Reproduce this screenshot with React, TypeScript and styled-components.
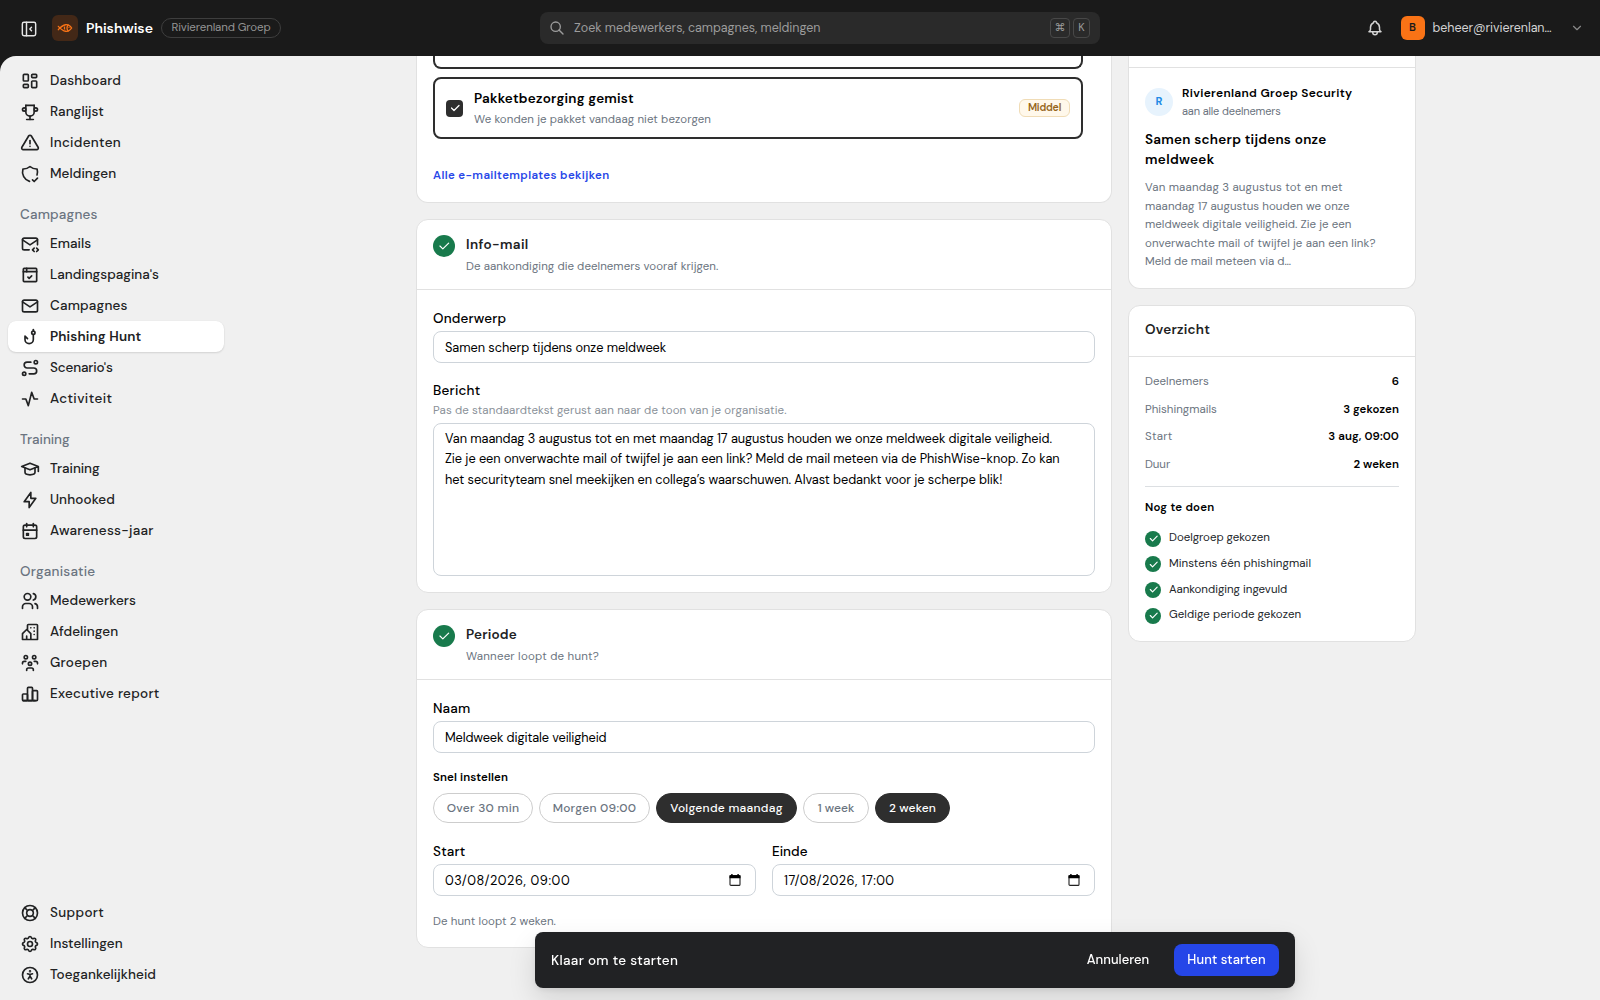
import React from "react";
import styled, { createGlobalStyle, css } from "styled-components";
import {
  TbLayoutDashboard, TbTrophy, TbAlertTriangle, TbShieldCheck, TbMailCode, TbBrowserCheck, TbMail,
  TbFishHook, TbRoute, TbActivity, TbSchool, TbBolt, TbCalendarEvent, TbUsers, TbBuildingCommunity,
  TbUsersGroup, TbChartBar, TbLifebuoy, TbSettings, TbAccessible, TbFish, TbSearch, TbBell,
  TbChevronDown, TbCheck, TbLayoutSidebarLeftCollapse,
} from "react-icons/tb";

type Tracked = { $ls?: number };
type Label = [text: string, tracking: number];

const tracking = css<Tracked>`
  letter-spacing: ${(p) => p.$ls ?? 0}px;
  white-space: nowrap;
`;

const GlobalStyle = createGlobalStyle`
  *, *::before, *::after { box-sizing: border-box; }
  body {
    margin: 0;
    background: #1a1a1a;
    color: #000;
    font-family: "DM Sans", Inter, "Liberation Sans", sans-serif;
    font-size: 13.5px;
    -webkit-font-smoothing: antialiased;
  }
`;

/* ---------- shell ---------- */

const Page = styled.div`
  display: flex;
  flex-direction: column;
  height: 1000px;
  overflow: hidden;
`;

const Shell = styled.div`
  flex: 1;
  min-height: 0;
  display: flex;
  background: #f0f0f0;
  border-top-left-radius: 16px;
  overflow: hidden;
`;

/* ---------- top bar ---------- */

const TopBar = styled.header`
  flex: none;
  height: 56px;
  display: grid;
  grid-template-columns: 540px 560px 1fr;
  align-items: center;
  background: #1a1a1a;
`;

const Brand = styled.div`
  display: flex;
  align-items: center;
  padding-left: 18.5px;
`;

const ToggleButton = styled.span`
  display: flex;
  color: #e6e6e6;
  margin: 1px 13.5px 0 0;
`;

const LogoTile = styled.span`
  width: 26px;
  height: 26px;
  border-radius: 6px;
  display: grid;
  place-items: center;
  background: #432817;
  color: #f97316;
`;

const BrandName = styled.span<Tracked>`
  ${tracking}
  margin-left: 8px;
  font-size: 14px;
  font-weight: 600;
  color: #fff;
`;

const OrgTag = styled.span<Tracked>`
  ${tracking}
  height: 20px;
  width: 120px;
  margin-left: 8px;
  border: 1px solid #3e3e3e;
  border-radius: 10px;
  text-align: center;
  font-size: 11.5px;
  line-height: 17px;
  color: #949494;
`;

const SearchBox = styled.div`
  height: 32px;
  display: flex;
  align-items: center;
  padding: 0 10px 0 9px;
  border-radius: 8px;
  background: #2a2a2a;
  color: #9c9c9c;
`;

const SearchHint = styled.span<Tracked>`
  ${tracking}
  flex: 1;
  margin-left: 9px;
  font-size: 12.5px;
`;

const Key = styled.kbd<{ $w: number }>`
  width: ${(p) => p.$w}px;
  height: 20px;
  margin-left: 3px;
  border: 1px solid #484848;
  border-radius: 4px;
  font-family: inherit;
  font-size: 11px;
  line-height: 17px;
  text-align: center;
`;

const Account = styled.div`
  display: flex;
  align-items: center;
  justify-content: flex-end;
  padding-right: 16.5px;
  color: #d4d4d4;
`;

const Avatar = styled.span`
  width: 24px;
  height: 24px;
  margin: 0 8px 0 17px;
  border-radius: 6px;
  background: #f97316;
  color: #1a1a1a;
  font-size: 11px;
  font-weight: 600;
  line-height: 23px;
  text-align: center;
`;

const AccountName = styled.span<Tracked>`
  ${tracking}
  width: 126px;
  margin-right: 11px;
  font-size: 12.5px;
`;

const Dim = styled.span`
  display: flex;
  color: #8a8a8a;
`;

/* ---------- sidebar ---------- */

const Sidebar = styled.nav`
  flex: none;
  width: 232px;
  display: flex;
  flex-direction: column;
  padding: 9px 8px 10px;
`;

const NavHeading = styled.div<Tracked>`
  ${tracking}
  height: 39px;
  padding: 16px 12px 0;
  font-weight: 500;
  line-height: 20px;
  color: #6b7480;
`;

const NavItem = styled.div<{ $active?: boolean }>`
  flex: none;
  width: 216px;
  height: 31px;
  display: flex;
  align-items: center;
  gap: 10.5px;
  padding-left: 11.5px;
  border-radius: 8px;
  color: #212223;
  font-weight: ${(p) => (p.$active ? 600 : 500)};
  background: ${(p) => (p.$active ? "#fff" : "transparent")};
  box-shadow: ${(p) => (p.$active ? "0 1px 2px rgba(0,0,0,.12), 0 0 1px rgba(0,0,0,.08)" : "none")};

  svg { position: relative; top: 0.5px; }
`;

const NavText = styled.span<Tracked>`
  ${tracking}
`;

const Spacer = styled.div`
  flex: 1;
`;

/* ---------- cards ---------- */

const Content = styled.main`
  width: 1000px;
  margin: 0 auto;
  display: flex;
  align-items: flex-start;
  gap: 16px;
`;

const Column = styled.div<{ $w: number }>`
  flex: none;
  width: ${(p) => p.$w}px;
  display: flex;
  flex-direction: column;
  gap: 16px;
`;

const Card = styled.section<{ $cut?: boolean }>`
  border: 1px solid #e1e1e1;
  border-top-width: ${(p) => (p.$cut ? 0 : 1)}px;
  border-radius: ${(p) => (p.$cut ? "0 0 12px 12px" : "12px")};
  background: #fff;
`;

const CardHead = styled.div`
  height: 70px;
  display: flex;
  gap: 11px;
  padding: 15px 16px 0;
  border-bottom: 1px solid #e1e1e1;
`;

const HeadStrip = styled.div`
  height: 12px;
  border-bottom: 1px solid #e1e1e1;
`;

const CardBody = styled.div`
  padding: 16px;
`;

const CheckDot = styled.span<{ $size: number }>`
  flex: none;
  width: ${(p) => p.$size}px;
  height: ${(p) => p.$size}px;
  border-radius: 50%;
  display: grid;
  place-items: center;
  background: #187a4c;
  color: #fff;
`;

const CardTitle = styled.div<Tracked>`
  ${tracking}
  font-weight: 600;
  line-height: 20px;
  color: #212223;
`;

const CardHint = styled.div<Tracked>`
  ${tracking}
  margin-top: 3px;
  font-size: 11.5px;
  line-height: 18px;
  color: #6b7480;
`;

/* ---------- template options ---------- */

const OptionList = styled.div`
  width: 650px;
  margin-left: 16px;
  display: flex;
  flex-direction: column;
  gap: 8px;
`;

const OptionTail = styled.div`
  height: 13px;
  border: 2px solid #2e2e2e;
  border-top: 0;
  border-radius: 0 0 8px 8px;
`;

const Option = styled.div`
  height: 62px;
  display: flex;
  align-items: center;
  padding: 0 11px;
  border: 2px solid #2e2e2e;
  border-radius: 8px;
`;

const Checkbox = styled.span`
  width: 17px;
  height: 17px;
  border-radius: 4px;
  display: grid;
  place-items: center;
  background: #2e2e2e;
  color: #fff;
`;

const OptionText = styled.div`
  flex: 1;
  margin-left: 11px;
`;

const OptionTitle = styled.div<Tracked>`
  ${tracking}
  font-weight: 600;
  line-height: 22px;
`;

const OptionSub = styled.div<Tracked>`
  ${tracking}
  font-size: 11.5px;
  line-height: 19px;
  color: #6b7480;
`;

const LevelBadge = styled.span<Tracked>`
  ${tracking}
  width: 51px;
  height: 18px;
  border: 1px solid #f0dcb6;
  border-radius: 6px;
  background: #fff8eb;
  color: #96661a;
  font-size: 10.5px;
  font-weight: 600;
  line-height: 16px;
  text-align: center;
`;

const TemplatesLink = styled.a<Tracked>`
  ${tracking}
  display: block;
  padding: 28px 16px 17px;
  font-size: 11.5px;
  font-weight: 600;
  line-height: 18px;
  color: #2847e8;
`;

/* ---------- form ---------- */

const FieldLabel = styled.div<Tracked & { $h?: number }>`
  ${tracking}
  font-weight: 500;
  line-height: ${(p) => p.$h ?? 25}px;
`;

const FieldHint = styled.div<Tracked>`
  ${tracking}
  margin-bottom: 4px;
  font-size: 11.5px;
  line-height: 16px;
  color: #8a9199;
`;

const fieldFrame = css`
  border: 1px solid #ced4da;
  border-radius: 8px;
  background: #fff;
  font-size: 12.75px;
`;

const TextField = styled.div<Tracked>`
  ${tracking}
  ${fieldFrame}
  height: 32px;
  display: flex;
  align-items: center;
  justify-content: space-between;
  padding: 0 14px 0 11px;
`;

const TextArea = styled.div`
  ${fieldFrame}
  height: 153px;
  padding: 5px 11px;
  line-height: 20.4px;
`;

const TextLine = styled.div<Tracked>`
  ${tracking}
`;

const Field = styled.div`
  flex: 1;
  & + & { margin-top: 16px; }
`;

const FieldRow = styled.div`
  display: flex;
  gap: 16px;
  margin-top: 16px;
  & > ${Field} { margin-top: 0; }
`;

const QuickLabel = styled.div<Tracked>`
  ${tracking}
  margin: 16px 0 6px;
  font-size: 11.5px;
  font-weight: 600;
  line-height: 18px;
`;

const Pills = styled.div`
  display: flex;
  gap: 6px;
`;

const Pill = styled.span<Tracked & { $w: number; $on?: boolean }>`
  ${tracking}
  width: ${(p) => p.$w}px;
  height: 30px;
  border: 1px solid ${(p) => (p.$on ? "#2e2e2e" : "#cdcdcd")};
  border-radius: 15px;
  background: ${(p) => (p.$on ? "#2e2e2e" : "#fff")};
  color: ${(p) => (p.$on ? "#fff" : "#6b7480")};
  font-size: 12px;
  font-weight: 500;
  line-height: 28px;
  text-align: center;
`;

const DurationNote = styled.div<Tracked>`
  ${tracking}
  margin-top: 16px;
  font-size: 11.5px;
  line-height: 19px;
  color: #6b7480;
`;

/* ---------- aside ---------- */

const Sender = styled.div`
  display: flex;
  align-items: center;
  gap: 9px;
`;

const SenderAvatar = styled.span`
  width: 28px;
  height: 28px;
  border-radius: 50%;
  background: #e7f3fd;
  color: #228be6;
  font-size: 11px;
  font-weight: 700;
  line-height: 27px;
  text-align: center;
`;

const SenderName = styled.div<Tracked>`
  ${tracking}
  font-size: 12px;
  font-weight: 600;
  line-height: 18px;
`;

const SenderTo = styled.div<Tracked>`
  ${tracking}
  font-size: 11px;
  line-height: 18px;
  color: #6b7480;
`;

const Subject = styled.div`
  margin: 10px 0 9px;
  font-weight: 600;
  line-height: 20px;
`;

const Excerpt = styled.div`
  font-size: 11.5px;
  line-height: 18.6px;
  color: #6b7480;
`;

const SummaryHead = styled.div`
  height: 51px;
  padding: 14px 16px 0;
  border-bottom: 1px solid #e1e1e1;
`;

const SummaryList = styled.div`
  display: flex;
  flex-direction: column;
  gap: 9px;
  padding-bottom: 12px;
  border-bottom: 1px solid #dcdfe2;
  font-size: 11.5px;
  line-height: 18.6px;
`;

const SummaryRow = styled.div`
  display: flex;
  justify-content: space-between;
`;

const SummaryKey = styled.span<Tracked>`
  ${tracking}
  color: #6b7480;
`;

const SummaryValue = styled.span<Tracked>`
  ${tracking}
  font-weight: 600;
`;

const TodoTitle = styled.div<Tracked>`
  ${tracking}
  margin: 12px 0 11.5px;
  font-size: 11.5px;
  font-weight: 600;
  line-height: 18.6px;
`;

const TodoList = styled.div`
  display: flex;
  flex-direction: column;
  gap: 7px;
`;

const TodoItem = styled.div`
  display: flex;
  align-items: center;
  gap: 8px;
  font-size: 11.5px;
  line-height: 18.6px;
  color: #212529;
`;

const TodoText = styled.span<Tracked>`
  ${tracking}
`;

/* ---------- action bar ---------- */

const ActionBar = styled.div`
  position: fixed;
  left: 535px;
  bottom: 12px;
  width: 760px;
  height: 56px;
  display: flex;
  align-items: center;
  padding: 0 16px;
  border-radius: 8px;
  background: #212224;
  color: #fff;
  box-shadow: 0 12px 28px rgba(0, 0, 0, 0.12), 0 2px 6px rgba(0, 0, 0, 0.08);
`;

const ReadyText = styled.span<Tracked>`
  ${tracking}
  flex: 1;
  font-weight: 500;
`;

const BarButton = styled.span<Tracked & { $w: number; $primary?: boolean }>`
  ${tracking}
  width: ${(p) => p.$w}px;
  height: 32px;
  border-radius: 8px;
  background: ${(p) => (p.$primary ? "#2546e8" : "transparent")};
  font-size: 13px;
  font-weight: 500;
  line-height: 32px;
  text-align: center;
`;

type NavEntry = [icon: React.ComponentType<{ size?: number }>, text: string, tracking: number];

const mainNav: NavEntry[] = [
  [TbLayoutDashboard, "Dashboard", 0.187],
  [TbTrophy, "Ranglijst", 0.07],
  [TbAlertTriangle, "Incidenten", 0.326],
  [TbShieldCheck, "Meldingen", 0.066],
];

const navGroups: { heading: Label; items: NavEntry[] }[] = [
  {
    heading: ["Campagnes", 0.19],
    items: [
      [TbMailCode, "Emails", 0.023],
      [TbBrowserCheck, "Landingspagina's", 0],
      [TbMail, "Campagnes", 0.19],
      [TbFishHook, "Phishing Hunt", 0.145],
      [TbRoute, "Scenario's", -0.149],
      [TbActivity, "Activiteit", 0.442],
    ],
  },
  {
    heading: ["Training", -0.038],
    items: [
      [TbSchool, "Training", -0.038],
      [TbBolt, "Unhooked", 0.125],
      [TbCalendarEvent, "Awareness-jaar", 0.283],
    ],
  },
  {
    heading: ["Organisatie", 0.216],
    items: [
      [TbUsers, "Medewerkers", 0.067],
      [TbBuildingCommunity, "Afdelingen", 0.063],
      [TbUsersGroup, "Groepen", 0.302],
      [TbChartBar, "Executive report", 0.279],
    ],
  },
];

const footerNav: NavEntry[] = [
  [TbLifebuoy, "Support", 0.349],
  [TbSettings, "Instellingen", 0.069],
  [TbAccessible, "Toegankelijkheid", 0.083],
];

const message: Label[] = [
  ["Van maandag 3 augustus tot en met maandag 17 augustus houden we onze meldweek digitale veiligheid.", -0.061],
  ["Zie je een onverwachte mail of twijfel je aan een link? Meld de mail meteen via de PhishWise-knop. Zo kan", -0.055],
  ["het securityteam snel meekijken en collega’s waarschuwen. Alvast bedankt voor je scherpe blik!", -0.051],
];

const excerpt: Label[] = [
  ["Van maandag 3 augustus tot en met", 0.166],
  ["maandag 17 augustus houden we onze", 0.044],
  ["meldweek digitale veiligheid. Zie je een", 0.037],
  ["onverwachte mail of twijfel je aan een link?", 0.1],
  ["Meld de mail meteen via d…", -0.01],
];

const presets: { label: Label; width: number; on?: boolean }[] = [
  { label: ["Over 30 min", 0.274], width: 100 },
  { label: ["Morgen 09:00", 0.265], width: 111 },
  { label: ["Volgende maandag", 0.279], width: 141, on: true },
  { label: ["1 week", 0.048], width: 66 },
  { label: ["2 weken", 0.139], width: 75, on: true },
];

const summary: [Label, Label][] = [
  [["Deelnemers", 0.035], ["6", 0]],
  [["Phishingmails", -0.008], ["3 gekozen", 0.067]],
  [["Start", 0.239], ["3 aug, 09:00", 0.096]],
  [["Duur", -0.065], ["2 weken", 0.082]],
];

const todos: Label[] = [
  ["Doelgroep gekozen", -0.029],
  ["Minstens één phishingmail", 0.075],
  ["Aankondiging ingevuld", -0.018],
  ["Geldige periode gekozen", 0.043],
];

const CalendarGlyph = () => (
  <svg width="12" height="12" viewBox="0 0 12 12" fill="none">
    <rect x="1" y="1.6" width="10" height="9.8" rx="1" stroke="#222" strokeWidth="1.1" />
    <path d="M.5 1.2h11v3H.5zM2.2 0h1.4v1.4H2.2zM8.4 0h1.4v1.4H8.4z" fill="#000" />
  </svg>
);

const NavList = ({ items, active }: { items: NavEntry[]; active?: string }) => (
  <>
    {items.map(([Icon, text, ls]) => (
      <NavItem key={text} $active={text === active}>
        <Icon size={20} />
        <NavText $ls={ls}>{text}</NavText>
      </NavItem>
    ))}
  </>
);

const SectionHead = ({ title, hint }: { title: Label; hint: Label }) => (
  <CardHead>
    <CheckDot $size={22}><TbCheck size={14} /></CheckDot>
    <div>
      <CardTitle $ls={title[1]}>{title[0]}</CardTitle>
      <CardHint $ls={hint[1]}>{hint[0]}</CardHint>
    </div>
  </CardHead>
);

export default function App() {
  return (
    <Page>
      <GlobalStyle />
      <TopBar>
        <Brand>
          <ToggleButton><TbLayoutSidebarLeftCollapse size={20} strokeWidth={1.75} /></ToggleButton>
          <LogoTile><TbFish size={16} /></LogoTile>
          <BrandName>Phishwise</BrandName>
          <OrgTag $ls={-0.111}>Rivierenland Groep</OrgTag>
        </Brand>
        <SearchBox>
          <TbSearch size={16} />
          <SearchHint $ls={-0.02}>Zoek medewerkers, campagnes, meldingen</SearchHint>
          <Key $w={20}>⌘</Key>
          <Key $w={17}>K</Key>
        </SearchBox>
        <Account>
          <TbBell size={18} />
          <Avatar>B</Avatar>
          <AccountName $ls={-0.07}>beheer@rivierenlan…</AccountName>
          <Dim><TbChevronDown size={14} /></Dim>
        </Account>
      </TopBar>

      <Shell>
        <Sidebar>
          <NavList items={mainNav} />
          {navGroups.map(({ heading, items }) => (
            <React.Fragment key={heading[0]}>
              <NavHeading $ls={heading[1]}>{heading[0]}</NavHeading>
              <NavList items={items} active="Phishing Hunt" />
            </React.Fragment>
          ))}
          <Spacer />
          <NavList items={footerNav} />
        </Sidebar>

        <Content>
          <Column $w={696}>
            <Card $cut>
              <OptionList>
                <OptionTail />
                <Option>
                  <Checkbox><TbCheck size={12} strokeWidth={2.5} /></Checkbox>
                  <OptionText>
                    <OptionTitle $ls={0.214}>Pakketbezorging gemist</OptionTitle>
                    <OptionSub $ls={0.083}>We konden je pakket vandaag niet bezorgen</OptionSub>
                  </OptionText>
                  <LevelBadge $ls={-0.2}>Middel</LevelBadge>
                </Option>
              </OptionList>
              <TemplatesLink $ls={0.372}>Alle e-mailtemplates bekijken</TemplatesLink>
            </Card>

            <Card>
              <SectionHead
                title={["Info-mail", 0.365]}
                hint={["De aankondiging die deelnemers vooraf krijgen.", 0.046]}
              />
              <CardBody>
                <Field>
                  <FieldLabel $ls={0.151}>Onderwerp</FieldLabel>
                  <TextField $ls={-0.045}>Samen scherp tijdens onze meldweek</TextField>
                </Field>
                <Field>
                  <FieldLabel $ls={0.216} $h={24}>Bericht</FieldLabel>
                  <FieldHint $ls={0.113}>Pas de standaardtekst gerust aan naar de toon van je organisatie.</FieldHint>
                  <TextArea>
                    {message.map(([text, ls]) => <TextLine key={text} $ls={ls}>{text}</TextLine>)}
                  </TextArea>
                </Field>
              </CardBody>
            </Card>

            <Card>
              <SectionHead title={["Periode", 0.193]} hint={["Wanneer loopt de hunt?", 0.214]} />
              <CardBody>
                <Field>
                  <FieldLabel $ls={0.133}>Naam</FieldLabel>
                  <TextField $ls={-0.11}>Meldweek digitale veiligheid</TextField>
                </Field>
                <QuickLabel $ls={0.134}>Snel instellen</QuickLabel>
                <Pills>
                  {presets.map(({ label, width, on }) => (
                    <Pill key={label[0]} $ls={label[1]} $w={width} $on={on}>{label[0]}</Pill>
                  ))}
                </Pills>
                <FieldRow>
                  <Field>
                    <FieldLabel $ls={0.201}>Start</FieldLabel>
                    <TextField $ls={0.6}>03/08/2026, 09:00<CalendarGlyph /></TextField>
                  </Field>
                  <Field>
                    <FieldLabel $ls={0.014}>Einde</FieldLabel>
                    <TextField $ls={0.43}>17/08/2026, 17:00<CalendarGlyph /></TextField>
                  </Field>
                </FieldRow>
                <DurationNote $ls={0.081}>De hunt loopt 2 weken.</DurationNote>
              </CardBody>
            </Card>
          </Column>

          <Column $w={288}>
            <Card $cut>
              <HeadStrip />
              <CardBody>
                <Sender>
                  <SenderAvatar>R</SenderAvatar>
                  <div>
                    <SenderName $ls={0.31}>Rivierenland Groep Security</SenderName>
                    <SenderTo $ls={-0.14}>aan alle deelnemers</SenderTo>
                  </div>
                </Sender>
                <Subject>
                  <TextLine $ls={0.251}>Samen scherp tijdens onze</TextLine>
                  <TextLine $ls={0.35}>meldweek</TextLine>
                </Subject>
                <Excerpt>
                  {excerpt.map(([text, ls]) => <TextLine key={text} $ls={ls}>{text}</TextLine>)}
                </Excerpt>
              </CardBody>
            </Card>

            <Card>
              <SummaryHead>
                <CardTitle $ls={0.24}>Overzicht</CardTitle>
              </SummaryHead>
              <CardBody>
                <SummaryList>
                  {summary.map(([key, value]) => (
                    <SummaryRow key={key[0]}>
                      <SummaryKey $ls={key[1]}>{key[0]}</SummaryKey>
                      <SummaryValue $ls={value[1]}>{value[0]}</SummaryValue>
                    </SummaryRow>
                  ))}
                </SummaryList>
                <TodoTitle $ls={0.24}>Nog te doen</TodoTitle>
                <TodoList>
                  {todos.map(([text, ls]) => (
                    <TodoItem key={text}>
                      <CheckDot $size={16}><TbCheck size={11} strokeWidth={2.5} /></CheckDot>
                      <TodoText $ls={ls}>{text}</TodoText>
                    </TodoItem>
                  ))}
                </TodoList>
              </CardBody>
            </Card>
          </Column>
        </Content>
      </Shell>

      <ActionBar>
        <ReadyText $ls={0.317}>Klaar om te starten</ReadyText>
        <BarButton $ls={0.021} $w={112}>Annuleren</BarButton>
        <BarButton $ls={0.123} $w={105} $primary>Hunt starten</BarButton>
      </ActionBar>
    </Page>
  );
}
